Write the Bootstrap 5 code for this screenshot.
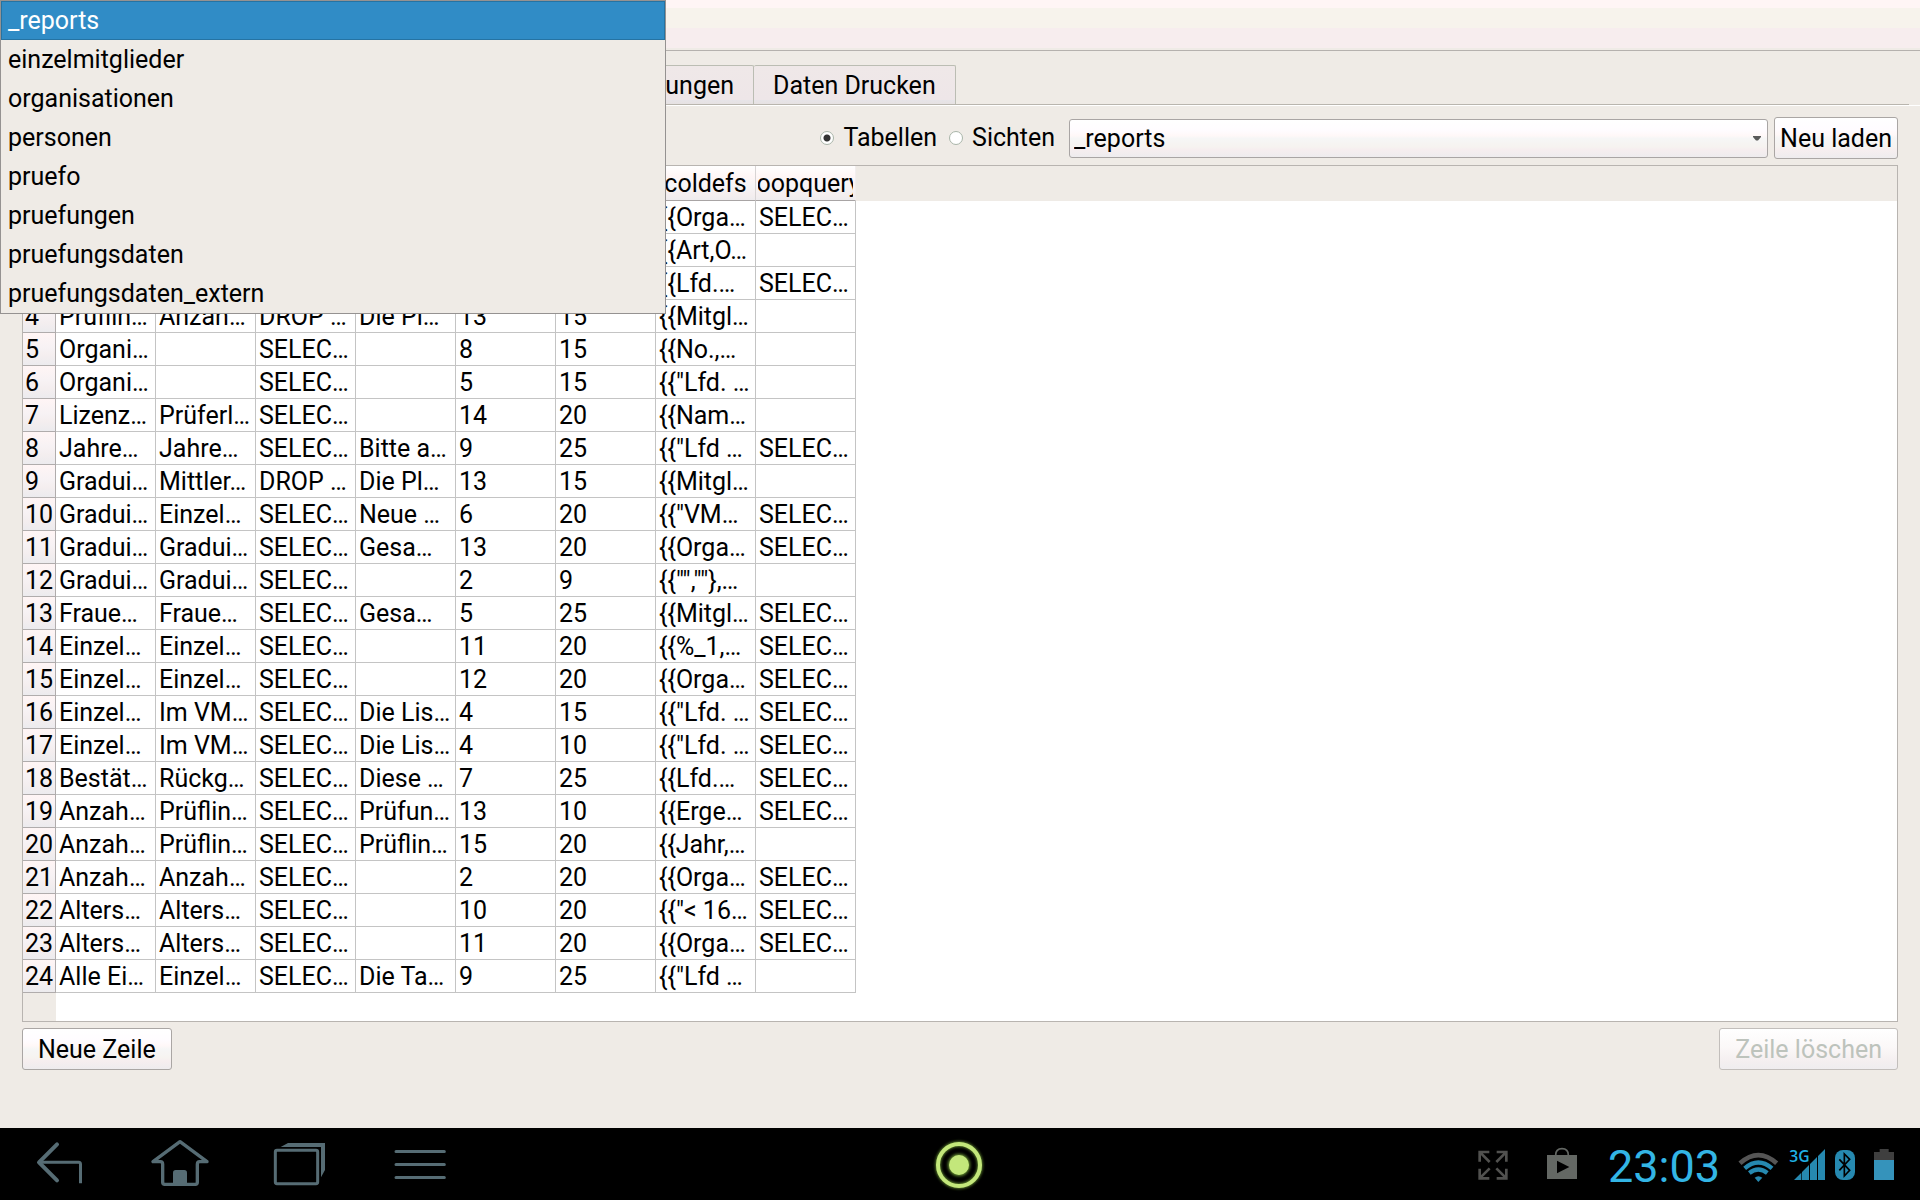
<!DOCTYPE html>
<html lang="de">
<head>
<meta charset="utf-8">
<meta name="viewport" content="width=device-width, initial-scale=1">
<title>Daten</title>
<link href="https://cdn.jsdelivr.net/npm/bootstrap@5.3.0/dist/css/bootstrap.min.css" rel="stylesheet">
<style>
:root { --face:#efebe6; --edge:#b8b4b0; --glossy:linear-gradient(#fff 0%,#fffcff 28%,#fff8f8 42%,#f6f6f6 50%,#f6f3f0 72%,#f6eeef 80%,#eeecee 100%); }
body { background:var(--face); color:#000; font-family:Roboto,"Liberation Sans",sans-serif; font-size:25px; line-height:32px; }
.topband { height:51px; border-bottom:1px solid #b5b1ae; background:linear-gradient(#fff5f5 0 8px,#f7f3ec 8px 28px,#f7edee 28px 48px,var(--face) 48px); }
.tabstrip { padding:14px 0 0 12px; margin-right:11px; border-bottom:1px solid #b9b5ae; }
.tabstrip .nav-link { color:#000; height:39px; line-height:40px; padding:0 19px; border:1px solid #bbbdb3; border-bottom:0; border-left-width:0; border-radius:2px 2px 0 0; background:linear-gradient(#efe8e8,#eee6e8 88%,#e7e4e8 90%,#e6e2e2); }
.tabstrip .first-tab { width:742px; text-align:right; }
.pane { border-top:1px solid #fff; padding:11px 22px 58px; margin:0; }
.tools { gap:6px; margin-bottom:6px; }
.radios { gap:12px; padding-right:8px; }
.form-check.choice { padding:0; margin:0; min-height:0; gap:9px; }
.choice .form-check-input { width:14px; height:14px; margin:0; float:none; border:1px solid #a9b5a9; background-color:#fff; }
.choice .form-check-input:checked { background-image:radial-gradient(circle,#333 0 3px,transparent 4px); background-size:100% 100%; }
.pickwrap { position:relative; flex:0 1 699px; height:42px; }
.pickwrap .picker { flex:1; height:39px; padding:0 30px 0 4px; color:#000; font-size:25px; line-height:35px; border:1px solid #a9a5a4; border-radius:3px; background:#fff var(--glossy) 0 0/100% 100% no-repeat; }
.pickwrap svg { position:absolute; right:7px; top:19px; pointer-events:none; }
.push { height:42px; padding:2px 15px 0; font-size:25px; line-height:38px; color:#000; border:1px solid #aaa6a4; border-radius:3px; background:var(--glossy); }
.push.tight { padding:2px 5px 0; }
.push:disabled { color:#bdc3bc; border-color:#c2bebb; background:linear-gradient(#fff,#fbf8f8 45%,#f4eff0 80%,#efedef); opacity:1; }
.actions { padding-top:6px; }
.sheet { border:1px solid var(--edge); background:linear-gradient(var(--face),var(--face)) 0 0/100% 35px no-repeat,linear-gradient(var(--face),var(--face)) 0 0/33px 100% no-repeat,#fff; }
.gridtab { width:833px; table-layout:fixed; border-collapse:separate; border-spacing:0; margin:0; }
.gridtab th, .gridtab td { padding:2px 0 0 3px; height:33px; line-height:30px; font-weight:400; overflow:hidden; white-space:nowrap; border:0 solid #c4c4c4; border-width:0 1px 1px 0; }
.gridtab thead th { height:35px; line-height:32px; padding:2px 2px 0; border-color:#d8d4d4; border-bottom-color:#a8a4a4; background:linear-gradient(#fff,#fff6f6 30%,#f6f4f6 60%,#f4eeef 85%,#eeecee); }
.gridtab thead th:last-child { border-right-color:#f2eeee; }
.gridtab thead span { display:flex; justify-content:center; overflow:hidden; }
.gridtab tbody th { padding-left:2px; overflow:visible; border-color:#b0acac; background:linear-gradient(#fff5f5,#f7f2f4 45%,#f4eeef 70%,#ecebee); }
.gridtab col.num { width:33px; }
.pop { position:absolute; left:0; top:0; width:666px; z-index:10; border:1px solid #959291; border-radius:0; background:var(--face); }
.pop .list-group-item { height:39px; padding:0 7px; line-height:39px; border:0; background:transparent; color:#000; }
.pop .list-group-item.active { margin:0; line-height:37px; padding:0 6px; color:#fff; background:#308cc6; border:1px solid #2573a3; }
.sysbar { height:72px; background:#000; }
.sysbar button { border:0; background:none; padding:0; width:120px; height:72px; }
.sysbar svg { display:block; flex:none; }
.sysbar .side { flex:1 1 0; }
.sysbar .record { width:60px; }
.clock { font-size:45px; line-height:72px; color:#33b5e5; padding:3px 16px 0 24px; width:151px; white-space:nowrap; }
.sysbar .gap-l { margin-left:3px; }
</style>
</head>
<body class="d-flex flex-column min-vh-100">
<ul class="list-group pop" role="listbox" aria-label="Tabelle">
  <li class="list-group-item active" role="option" aria-selected="true">_reports</li>
  <li class="list-group-item" role="option">einzelmitglieder</li>
  <li class="list-group-item" role="option">organisationen</li>
  <li class="list-group-item" role="option">personen</li>
  <li class="list-group-item" role="option">pruefo</li>
  <li class="list-group-item" role="option">pruefungen</li>
  <li class="list-group-item" role="option">pruefungsdaten</li>
  <li class="list-group-item" role="option">pruefungsdaten_extern</li>
</ul>
<header class="topband"></header>
<nav class="nav tabstrip flex-nowrap">
  <a class="nav-link first-tab" href="#">Prüfungen</a>
  <a class="nav-link" href="#">Daten Drucken</a>
</nav>
<main class="pane flex-grow-1 d-flex flex-column">
  <div class="tools d-flex align-items-center">
    <div class="radios d-flex flex-grow-1 justify-content-end">
      <div class="form-check choice d-flex align-items-center">
        <input class="form-check-input" type="radio" name="art" id="tabellen" checked><label for="tabellen">Tabellen</label>
      </div>
      <div class="form-check choice d-flex align-items-center">
        <input class="form-check-input" type="radio" name="art" id="sichten"><label for="sichten">Sichten</label>
      </div>
    </div>
    <div class="pickwrap d-flex align-items-center">
      <select class="form-select picker" aria-label="Tabelle wählen"><option>_reports</option><option>einzelmitglieder</option><option>organisationen</option><option>personen</option><option>pruefo</option><option>pruefungen</option><option>pruefungsdaten</option><option>pruefungsdaten_extern</option></select>
      <svg width="8" height="5" viewBox="0 0 8 5"><path d="M0 0h8v1L5 4.500H3L0 1z" fill="#5a5a5a"/></svg>
    </div>
    <button class="btn push tight" type="button">Neu laden</button>
  </div>
  <div class="sheet flex-grow-1">
    <table class="gridtab">
      <colgroup><col class="num"><col><col><col><col><col><col><col><col></colgroup>
      <thead><tr><th></th><th></th><th></th><th></th><th></th><th></th><th></th><th scope="col"><span>coldefs</span></th><th scope="col"><span>loopquery</span></th></tr></thead>
      <tbody id="rows"></tbody>
    </table>
  </div>
  <div class="actions d-flex justify-content-between">
    <button class="btn push" type="button">Neue Zeile</button>
    <button class="btn push" type="button" disabled>Zeile löschen</button>
  </div>
</main>
<footer class="sysbar d-flex">
  <div class="side d-flex">
    <button type="button" aria-label="Zurück"><svg width="120" height="72" viewBox="0 54 360 216" fill="none" stroke="#566c74" stroke-linecap="round"><path d="M171 103 117 157 171 211" stroke-width="12" stroke-linejoin="round"/><path d="M120 157H236Q241.500 157 241.500 163V220" stroke-width="9" stroke-linecap="butt"/></svg></button>
    <button type="button" aria-label="Startseite"><svg width="120" height="72" viewBox="360 54 360 216" fill="none" stroke="#566c74" stroke-width="10" stroke-linejoin="round"><path d="M540 95 459 155H481Q488 155 488 163V217Q488 223 494 223H586Q592 223 592 217V163Q592 155 599 155H621Z"/><path d="M519 223V188Q519 180 527 180H553Q561 180 561 188V223Z" fill="#566c74" stroke="none"/></svg></button>
    <button type="button" aria-label="Letzte Apps"><svg width="120" height="72" viewBox="720 54 360 216"><rect x="826" y="121" width="127" height="100" rx="5" fill="none" stroke="#566c74" stroke-width="9"/><path d="M842 111 864 99H975V180L963 202V111Z" fill="#566c74"/></svg></button>
    <button type="button" aria-label="Menü"><svg width="120" height="72" viewBox="1080 54 360 216" stroke="#566c74" stroke-width="9" stroke-linecap="round"><path d="M1188 124.500H1333M1188 163.500H1333M1188 202.500H1333"/></svg></button>
  </div>
  <button class="record" type="button" aria-label="Aufnahme"><svg width="60" height="72" viewBox="0 0 60 72"><defs><filter id="halo" x="-20%" y="-20%" width="140%" height="140%"><feGaussianBlur stdDeviation="1.500"/></filter></defs><g fill="none" stroke="#6d9a35" filter="url(#halo)"><circle cx="29" cy="37" r="21" stroke-width="5"/><circle cx="29" cy="37" r="9" stroke-width="4"/></g><circle cx="29" cy="37" r="21" fill="none" stroke="#c3e77b" stroke-width="4"/><circle cx="29" cy="37" r="10" fill="#c3e77b"/></svg></button>
  <div class="side d-flex justify-content-end">
    <svg width="50" height="72" viewBox="90 54 150 216" fill="none" stroke="#51514f" stroke-width="8"><path d="M119 155V126H148M121 128 149 156M170 126H199V155M197 128 169 156M119 176V205H148M121 203 149 175M170 205H199V176M197 203 169 175"/></svg>
    <svg class="ms-4" width="40" height="72" viewBox="312 54 120 216"><path d="M347 136Q347 116 366 116T385 136" fill="none" stroke="#646864" stroke-width="5"/><path d="M321 135H411V207H321Z" fill="#646864"/><path d="M351 152 388 171 351 190Z" fill="#000"/></svg>
    <div class="clock">23:03</div>
    <svg width="47" height="72" viewBox="885 54 141 216" fill="none"><path d="M900 160Q955 111 1010 160" stroke="#555" stroke-width="14"/><path d="M914 175Q955 140 996 175M928 189Q955 168 982 189" stroke="#2689b0" stroke-width="13"/><path d="M944 203Q955 194 967 203L955 216Z" fill="#2689b0"/></svg>
    <svg class="gap-l" width="44" height="72" viewBox="1035 54 132 216"><path d="M1062 210 1084 188V210ZM1086 186 1107 165V210H1086ZM1110 162 1131 141V210H1110ZM1134 138 1155 117V210H1134Z" fill="#2689b0"/><text x="1048" y="157" font-size="47" font-weight="600" font-family="Open Sans, sans-serif" fill="#1fb0e6">3G</text></svg>
    <svg class="gap-l" width="26" height="72" viewBox="1176 54 78 216"><rect x="1185" y="120" width="60" height="90" rx="24" fill="#2689b0"/><path d="M1198 148 1229 181 1213 198V132L1229 148 1198 181" fill="none" stroke="#000" stroke-width="5"/></svg>
    <svg width="62" height="72" viewBox="1254 54 186 216"><path d="M1302 150V126H1319V117H1346V126H1362V150Z" fill="#3f3f3f"/><path d="M1302 150H1362V210H1302Z" fill="#3593bb"/></svg>
  </div>
</footer>
<script src="https://cdn.jsdelivr.net/npm/bootstrap@5.3.0/dist/js/bootstrap.bundle.min.js"></script>
<script>
const S = 'SELEC…';
const data = [
  ['','','','','','','','{{Orga…',S],
  ['','','','','','','','{{Art,O…',''],
  ['','','','','','','','{{Lfd.…',S],
  ['4','Prüflin…','Anzah…','DROP …','Die Pl…','13','15','{{Mitgl…',''],
  ['5','Organi…','',S,'','8','15','{{No.,…',''],
  ['6','Organi…','',S,'','5','15','{{"Lfd. …',''],
  ['7','Lizenz…','Prüferl…',S,'','14','20','{{Nam…',''],
  ['8','Jahre…','Jahre…',S,'Bitte a…','9','25','{{"Lfd …',S],
  ['9','Gradui…','Mittler…','DROP …','Die Pl…','13','15','{{Mitgl…',''],
  ['10','Gradui…','Einzel…',S,'Neue …','6','20','{{"VM…',S],
  ['11','Gradui…','Gradui…',S,'Gesa…','13','20','{{Orga…',S],
  ['12','Gradui…','Gradui…',S,'','2','9','{{"",""},…',''],
  ['13','Fraue…','Fraue…',S,'Gesa…','5','25','{{Mitgl…',S],
  ['14','Einzel…','Einzel…',S,'','11','20','{{%_1,…',S],
  ['15','Einzel…','Einzel…',S,'','12','20','{{Orga…',S],
  ['16','Einzel…','Im VM…',S,'Die Lis…','4','15','{{"Lfd. …',S],
  ['17','Einzel…','Im VM…',S,'Die Lis…','4','10','{{"Lfd. …',S],
  ['18','Bestät…','Rückg…',S,'Diese …','7','25','{{Lfd.…',S],
  ['19','Anzah…','Prüflin…',S,'Prüfun…','13','10','{{Erge…',S],
  ['20','Anzah…','Prüflin…',S,'Prüflin…','15','20','{{Jahr,…',''],
  ['21','Anzah…','Anzah…',S,'','2','20','{{Orga…',S],
  ['22','Alters…','Alters…',S,'','10','20','{{"< 16…',S],
  ['23','Alters…','Alters…',S,'','11','20','{{Orga…',S],
  ['24','Alle Ei…','Einzel…',S,'Die Ta…','9','25','{{"Lfd …','']
];
const body = document.getElementById('rows');
data.forEach(([no, ...cells]) => {
  const tr = body.insertRow();
  const th = document.createElement('th');
  th.scope = 'row';
  th.textContent = no;
  tr.append(th);
  cells.forEach(t => { tr.insertCell().textContent = t; });
});
</script>
</body>
</html>
